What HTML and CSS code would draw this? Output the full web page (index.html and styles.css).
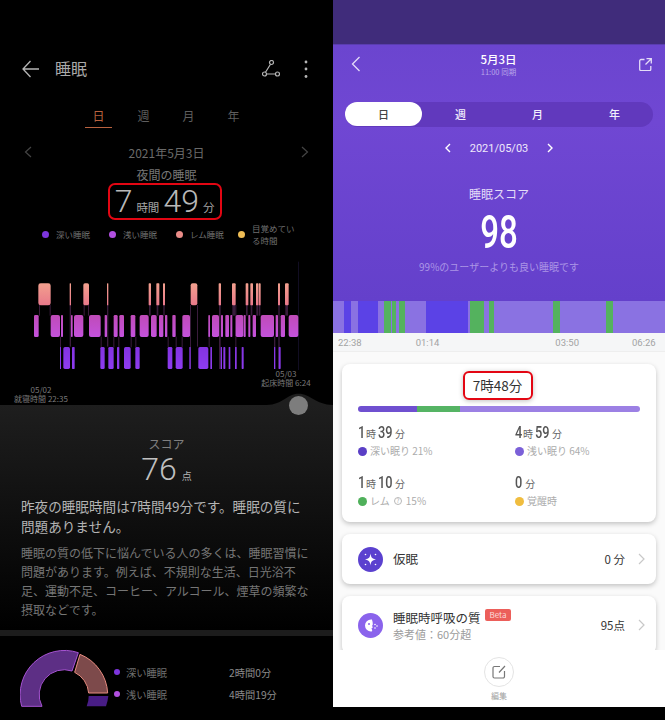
FILE: index.html
```html
<!DOCTYPE html>
<html lang="ja">
<head>
    <meta charset="UTF-8">
    <title>睡眠</title>
    <link rel="stylesheet" href="styles.css">
</head>
<body>
<div class="screens">

    <!-- dark app -->
    <section class="dark">
        <header class="d-head">
            <svg class="d-back" width="18" height="18" viewBox="0 0 18 18"><path d="M17 9H1M8.500 1 1 9l7.500 8" fill="none" stroke="#b5b5b5" stroke-width="1.300"/></svg>
            <h1 class="d-title">睡眠</h1>
            <svg class="d-link" width="18" height="18" viewBox="0 0 18 18"><g fill="none" stroke="#b5b5b5" stroke-width="1.200"><circle cx="9.500" cy="2.500" r="2"/><circle cx="2.500" cy="14" r="2"/><circle cx="15.500" cy="14" r="2"/><path d="M8.500 4.300 3.500 12.300M4.500 14h9"/></g></svg>
            <svg class="d-more" width="4" height="18" viewBox="0 0 4 18"><g fill="#b5b5b5"><circle cx="2" cy="2" r="1.400"/><circle cx="2" cy="9" r="1.400"/><circle cx="2" cy="16.500" r="1.400"/></g></svg>
        </header>

        <nav class="d-tabs">
            <span class="d-tab on">日</span>
            <span class="d-tab">週</span>
            <span class="d-tab">月</span>
            <span class="d-tab">年</span>
        </nav>

        <div class="d-date">
            <svg width="8" height="12" viewBox="0 0 8 12"><path d="M7 1 1.500 6 7 11" fill="none" stroke="#444" stroke-width="1.200"/></svg>
            <span>2021年5月3日</span>
            <svg width="8" height="12" viewBox="0 0 8 12"><path d="M1 1l5.500 5L1 11" fill="none" stroke="#444" stroke-width="1.200"/></svg>
        </div>

        <div class="d-night">夜間の睡眠</div>
        <div class="d-total-wrap">
            <div class="d-total"><b>7</b><i>時間</i><b>49</b><i>分</i></div>
        </div>

        <div class="d-legend">
            <span class="d-leg"><em class="dot c-deep"></em>深い睡眠</span>
            <span class="d-leg"><em class="dot c-light"></em>浅い睡眠</span>
            <span class="d-leg third"><em class="dot c-rem"></em>レム睡眠</span>
            <span class="d-leg last"><em class="dot c-wake"></em>目覚めている時間</span>
        </div>

        <div class="d-chart">
            <svg width="333" height="150" viewBox="0 0 999 450">
                <defs>
                    <linearGradient id="gr" x1="0" y1="0" x2="0" y2="1"><stop offset="0" stop-color="#f2a08e"/><stop offset="1" stop-color="#e9798a"/></linearGradient>
                    <linearGradient id="gl" x1="0" y1="0" x2="0" y2="1"><stop offset="0" stop-color="#bf4bb8"/><stop offset="1" stop-color="#c452dc"/></linearGradient>
                    <linearGradient id="gd" x1="0" y1="0" x2="0" y2="1"><stop offset="0" stop-color="#8333e0"/><stop offset="1" stop-color="#8e3cf0"/></linearGradient>
                </defs>
                <rect x="894" y="20" width="2" height="325" fill="#1a1433"/>
                <g class="bars">
                    <g fill="#3a1c3c">
                        <rect x="117" y="150" width="3" height="32"/><rect x="149" y="150" width="3" height="32"/><rect x="209" y="150" width="4" height="125"/><rect x="180" y="245" width="3" height="32"/><rect x="251" y="150" width="3" height="32"/><rect x="264" y="150" width="3" height="32"/><rect x="321" y="150" width="4" height="125"/><rect x="302" y="245" width="3" height="32"/><rect x="340" y="245" width="3" height="32"/><rect x="355" y="245" width="3" height="32"/><rect x="392" y="245" width="3" height="32"/><rect x="406" y="245" width="3" height="32"/><rect x="447" y="150" width="5" height="32"/><rect x="470" y="150" width="5" height="32"/><rect x="490" y="150" width="4" height="32"/><rect x="503" y="245" width="3" height="32"/><rect x="527" y="245" width="3" height="32"/><rect x="545" y="245" width="3" height="32"/><rect x="570" y="150" width="3" height="192"/><rect x="591" y="150" width="3" height="125"/><rect x="626" y="185" width="3" height="92"/><rect x="657" y="150" width="5" height="192"/><rect x="697" y="150" width="9" height="32"/><rect x="706" y="150" width="3" height="192"/><rect x="738" y="150" width="5" height="32"/><rect x="752" y="150" width="5" height="32"/><rect x="769" y="150" width="5" height="32"/><rect x="776" y="150" width="5" height="32"/><rect x="835" y="150" width="4" height="192"/><rect x="856" y="150" width="8" height="32"/><rect x="822" y="245" width="4" height="32"/>
                    </g>
                    <g fill="url(#gr)">
                        <rect x="115" y="85" width="37" height="66" rx="7"/><rect x="209" y="85" width="4" height="66" rx="1"/><rect x="250" y="85" width="17" height="66" rx="5"/><rect x="321" y="85" width="4" height="66" rx="1"/><rect x="446" y="85" width="7" height="66" rx="2"/><rect x="469" y="85" width="9" height="66" rx="2"/><rect x="489" y="85" width="6" height="66" rx="2"/><rect x="572" y="85" width="20" height="66" rx="6"/><rect x="656" y="85" width="7" height="66" rx="2"/><rect x="696" y="85" width="11" height="66" rx="3"/><rect x="737" y="85" width="8" height="66" rx="2"/><rect x="751" y="85" width="8" height="66" rx="2"/><rect x="768" y="85" width="7" height="66" rx="2"/><rect x="776" y="85" width="6" height="66" rx="2"/><rect x="834" y="85" width="6" height="66" rx="2"/><rect x="855" y="85" width="11" height="66" rx="3"/>
                    </g>
                    <g fill="url(#gl)">
                        <rect x="102" y="180" width="14" height="66" rx="4"/><rect x="152" y="180" width="28" height="66" rx="6"/><rect x="183" y="180" width="6" height="66" rx="2"/><rect x="213" y="180" width="5" height="66" rx="2"/><rect x="222" y="180" width="28" height="66" rx="6"/><rect x="267" y="180" width="35" height="66" rx="6"/><rect x="314" y="180" width="7" height="66" rx="2"/><rect x="341" y="180" width="12" height="66" rx="4"/><rect x="358" y="180" width="14" height="66" rx="4"/><rect x="392" y="180" width="14" height="66" rx="4"/><rect x="419" y="180" width="27" height="66" rx="6"/><rect x="453" y="180" width="17" height="66" rx="5"/><rect x="477" y="180" width="13" height="66" rx="4"/><rect x="495" y="180" width="7" height="66" rx="2"/><rect x="517" y="180" width="10" height="66" rx="3"/><rect x="547" y="180" width="23" height="66" rx="5"/><rect x="625" y="180" width="5" height="66" rx="2"/><rect x="636" y="180" width="21" height="66" rx="5"/><rect x="663" y="180" width="6" height="66" rx="2"/><rect x="676" y="180" width="11" height="66" rx="3"/><rect x="691" y="180" width="6" height="66" rx="2"/><rect x="707" y="180" width="23" height="66" rx="5"/><rect x="731" y="180" width="6" height="66" rx="2"/><rect x="745" y="180" width="6" height="66" rx="2"/><rect x="758" y="180" width="10" height="66" rx="3"/><rect x="782" y="180" width="40" height="66" rx="6"/><rect x="827" y="180" width="7" height="66" rx="2"/><rect x="842" y="180" width="13" height="66" rx="4"/><rect x="866" y="180" width="29" height="66" rx="6"/>
                    </g>
                    <g fill="url(#gd)">
                        <rect x="180" y="276" width="3" height="66" rx="1"/><rect x="190" y="276" width="20" height="66" rx="5"/><rect x="216" y="276" width="8" height="66" rx="2"/><rect x="301" y="276" width="13" height="66" rx="4"/><rect x="325" y="276" width="16" height="66" rx="4"/><rect x="351" y="276" width="7" height="66" rx="2"/><rect x="372" y="276" width="20" height="66" rx="5"/><rect x="406" y="276" width="13" height="66" rx="4"/><rect x="503" y="276" width="14" height="66" rx="4"/><rect x="527" y="276" width="21" height="66" rx="5"/><rect x="568" y="276" width="4" height="66" rx="1"/><rect x="595" y="276" width="30" height="66" rx="5"/><rect x="631" y="276" width="5" height="66" rx="1"/><rect x="662" y="276" width="4" height="66" rx="1"/><rect x="670" y="276" width="6" height="66" rx="2"/><rect x="686" y="276" width="5" height="66" rx="1"/><rect x="705" y="276" width="5" height="66" rx="1"/><rect x="725" y="276" width="6" height="66" rx="2"/><rect x="822" y="276" width="4" height="66" rx="1"/><rect x="836" y="276" width="6" height="66" rx="2"/>
                    </g>
                </g>
                <path d="M800 450C850 448 860 416 896 416C932 416 945 448 999 450Z" fill="#1e1e1e"/>
            </svg>
            <div class="d-bed">05/02<br>就寝時間 22:35</div>
            <div class="d-wake">05/03<br>起床時間 6:24</div>
            <span class="d-knob"></span>
        </div>

        <div class="d-panel">
            <div class="d-score-t">スコア</div>
            <div class="d-score"><b>76</b><i>点</i></div>
            <p class="d-msg">昨夜の睡眠時間は7時間49分です。睡眠の質に問題ありません。</p>
            <p class="d-note">睡眠の質の低下に悩んでいる人の多くは、睡眠習慣に問題があります。例えば、不規則な生活、日光浴不足、運動不足、コーヒー、アルコール、煙草の頻繁な摂取などです。</p>
        </div>

        <div class="d-bottom">
            <svg class="d-donut" width="90" height="60" viewBox="0 0 270 180">
                <path d="M5 178A133 133 0 0 1 175 17L156 72A75 75 0 0 0 66 178Z" fill="#5d2f85" stroke="#a653d2" stroke-width="3"/>
                <path d="M180 22A133 133 0 0 1 263 138H206A75 75 0 0 0 164 76Z" fill="#7d4a4b" stroke="#e88c80" stroke-width="3"/>
                <path d="M265 147A133 133 0 0 1 258 178H200A75 75 0 0 0 206 147Z" fill="#481d85"/>
            </svg>
            <div class="d-rows">
                <div class="d-row"><em class="dot c-deep"></em><span>深い睡眠</span><span class="d-val">2時間0分</span></div>
                <div class="d-row"><em class="dot c-light"></em><span>浅い睡眠</span><span class="d-val">4時間19分</span></div>
            </div>
        </div>
    </section>

    <!-- purple app -->
    <section class="light">
        <div class="l-status"></div>
        <div class="l-top">
            <header class="l-head">
                <svg width="10" height="16" viewBox="0 0 10 16"><path d="M8.500 1 1.500 8l7 7" fill="none" stroke="#e4dcf8" stroke-width="1.300"/></svg>
                <div class="l-head-mid">
                    <div class="l-day">5月3日</div>
                    <div class="l-sync">11:00 同期</div>
                </div>
                <svg width="13" height="13" viewBox="0 0 13 13"><path d="M5.500 1.500H2A1.300 1.300 0 0 0 .700 2.800v8.500A1.300 1.300 0 0 0 2 12.600h8.500a1.300 1.300 0 0 0 1.300-1.300V8M7.500.700h4.800v4.800M12.300.700 6.500 6.500" fill="none" stroke="#e4dcf8" stroke-width="1.300"/></svg>
            </header>

            <nav class="l-tabs">
                <span class="l-tab on">日</span>
                <span class="l-tab">週</span>
                <span class="l-tab">月</span>
                <span class="l-tab">年</span>
            </nav>

            <div class="l-date">
                <svg width="6" height="10" viewBox="0 0 6 10"><path d="M5 1 1 5l4 4" fill="none" stroke="#fff" stroke-width="1.400"/></svg>
                <span>2021/05/03</span>
                <svg width="6" height="10" viewBox="0 0 6 10"><path d="M1 1l4 4-4 4" fill="none" stroke="#fff" stroke-width="1.400"/></svg>
            </div>

            <div class="l-score-t">睡眠スコア</div>
            <div class="l-score">98</div>
            <div class="l-rank">99%のユーザーよりも良い睡眠です</div>
        </div>

        <div class="l-strip">
            <span class="s-d" style="left:11px;width:7px"></span>
            <span class="s-d" style="left:25px;width:20px"></span>
            <span class="s-d" style="left:93px;width:42px"></span>
            <span class="s-g" style="left:51px;width:7px"></span>
            <span class="s-g" style="left:59px;width:4px"></span>
            <span class="s-g" style="left:66px;width:6px"></span>
            <span class="s-g" style="left:137px;width:14px"></span>
            <span class="s-g" style="left:156px;width:5px"></span>
            <span class="s-g" style="left:220px;width:7px"></span>
            <span class="s-g" style="left:273px;width:7px"></span>
        </div>
        <div class="l-times"><span>22:38</span><span class="t2">01:14</span><span class="t3">03:50</span><span class="t4">06:26</span></div>

        <div class="l-body">
            <div class="card sum">
                <div class="sum-total-wrap"><div class="sum-total">7時48分</div></div>
                <div class="sum-bar"><span class="b1"></span><span class="b2"></span><span class="b3"></span></div>
                <div class="sum-grid">
                    <div class="stat">
                        <div class="stat-v"><b>1</b>時<b class="n2">39</b>分</div>
                        <div class="stat-l"><em class="dot2 d1"></em>深い眠り 21%</div>
                    </div>
                    <div class="stat">
                        <div class="stat-v"><b>4</b>時<b class="n2">59</b>分</div>
                        <div class="stat-l"><em class="dot2 d2"></em>浅い眠り 64%</div>
                    </div>
                    <div class="stat">
                        <div class="stat-v"><b>1</b>時<b class="n2">10</b>分</div>
                        <div class="stat-l"><em class="dot2 d3"></em>レム <span class="q">?</span> 15%</div>
                    </div>
                    <div class="stat">
                        <div class="stat-v"><b>0</b> 分</div>
                        <div class="stat-l"><em class="dot2 d4"></em>覚醒時</div>
                    </div>
                </div>
            </div>

            <div class="card row">
                <svg class="ico" width="25" height="25" viewBox="0 0 25 25"><circle cx="12.500" cy="12.500" r="12.500" fill="#5b41cf"/><path d="M12.500 6.500c.6 4 1.500 5 5.500 6-4 .8-5 1.800-5.500 6-.6-4.200-1.500-5.200-5.500-6 4-1 5-2 5.500-6Z" fill="#fff"/><g fill="#fff"><circle cx="7.500" cy="7.500" r=".8"/><circle cx="17.500" cy="7.500" r=".8"/><circle cx="7.500" cy="17.500" r=".8"/><circle cx="17.500" cy="17.500" r=".8"/></g></svg>
                <div class="row-main"><div class="row-t">仮眠</div></div>
                <span class="row-v">0 分</span>
                <svg class="chev" width="7" height="12" viewBox="0 0 7 12"><path d="M1 1l5 5-5 5" fill="none" stroke="#c8c8c8" stroke-width="1.200"/></svg>
            </div>

            <div class="card row tall">
                <svg class="ico" width="25" height="25" viewBox="0 0 25 25"><circle cx="12.500" cy="12.500" r="12.500" fill="#8a63ec"/><path d="M13 6.500a6 6 0 1 0 0 12c1 0 1.500-.8 1-1.800l-.5-1.500 1.500-1-1-1.200.8-1.500c0-3-.5-5-1.800-5.500Z" fill="#fff"/><circle cx="11" cy="11" r="1" fill="#8a63ec"/><g fill="#fff"><circle cx="17" cy="11.500" r=".8"/><circle cx="19" cy="13" r=".8"/><circle cx="17" cy="15" r=".8"/></g></svg>
                <div class="row-main">
                    <div class="row-t">睡眠時呼吸の質<span class="beta">Beta</span></div>
                    <div class="row-s">参考値：60分超</div>
                </div>
                <span class="row-v">95点</span>
                <svg class="chev" width="7" height="12" viewBox="0 0 7 12"><path d="M1 1l5 5-5 5" fill="none" stroke="#c8c8c8" stroke-width="1.200"/></svg>
            </div>
        </div>

        <footer class="l-foot">
            <span class="edit-btn">
                <svg width="14" height="14" viewBox="0 0 14 14"><path d="M8 1.500H2.500a1.500 1.500 0 0 0-1.500 1.500v8.500A1.500 1.500 0 0 0 2.500 13H11a1.500 1.500 0 0 0 1.500-1.500V6M13 1 7 7.500" fill="none" stroke="#777" stroke-width="1.200"/></svg>
            </span>
            <span class="edit-l">編集</span>
        </footer>
        <div class="l-nav"></div>
    </section>
</div>
</body>
</html>
```

FILE: styles.css
```css
* {
    box-sizing: border-box;
}

html, body {
    margin: 0;
    height: 720px;
    overflow: hidden;
    background: #000;
}

body {
    font-family: "Noto Sans CJK JP", "Noto Sans", sans-serif;
}

p, h1 {
    margin: 0;
    font-weight: normal;
}

i, em {
    font-style: normal;
}

.screens {
    display: flex;
    width: 665px;
    height: 720px;
}

.dot {
    flex: none;
    display: inline-block;
    width: 6px;
    height: 6px;
    border-radius: 50%;
}

.c-deep { background: #7d35dd; }
.c-light { background: #b14fe0; }
.c-rem { background: #ea8c88; }
.c-wake { background: #efbd55; }

/* dark app */
.dark {
    width: 333px;
    height: 720px;
    overflow: hidden;
    background: #000;
    color: #888;
}

.d-head {
    display: flex;
    align-items: center;
    height: 38px;
    margin-top: 50px;
    padding: 0 25px 0 22px;
}

.d-title {
    flex: 1;
    margin: -2px 0 0 15px;
    font-size: 16px;
    color: #aaa;
}

.d-more {
    margin-left: 24px;
}

.d-tabs {
    display: flex;
    margin: 16px 0 0 76px;
}

.d-tab {
    width: 45px;
    height: 24px;
    text-align: center;
    font-size: 12px;
    line-height: 24px;
    color: #5e5e5e;
}

.d-tab.on {
    color: #b9623f;
    box-shadow: inset 0 -1px 0 #b9623f;
    margin: 0 9px;
    width: 27px;
}

.d-date {
    display: flex;
    justify-content: space-between;
    align-items: center;
    height: 18px;
    margin-top: 15px;
    padding: 0 24px;
    font-size: 12px;
    color: #6a6a6a;
}

.d-night {
    margin-top: 5px;
    text-align: center;
    font-size: 12px;
    line-height: 18px;
    color: #777;
}

.d-total-wrap {
    display: flex;
    justify-content: center;
    margin: -1px 3px 0 0;
}

.d-total {
    display: flex;
    align-items: baseline;
    justify-content: center;
    width: 114px;
    height: 37px;
    padding-left: 3px;
    border: 2px solid #e30613;
    border-radius: 7px;
    font-family: Roboto, sans-serif;
    color: #b8b8b8;
    line-height: 32px;
}

.d-total b {
    font-size: 32px;
    font-weight: 300;
}

.d-total i {
    margin: 0 4px;
    font-family: "Noto Sans CJK JP", sans-serif;
    font-size: 11.500px;
    color: #a6a6a6;
}

.d-legend {
    display: flex;
    align-items: center;
    height: 30px;
    margin: -1px 0 6px;
    padding-left: 42px;
    font-size: 8.500px;
    color: #6f6f6f;
}

.d-legend .dot {
    width: 7px;
    height: 7px;
}

.d-leg {
    display: flex;
    align-items: center;
    gap: 7px;
    margin-right: 19px;
    white-space: nowrap;
}

.d-leg.third {
    margin-right: 14px;
}

.d-leg.last {
    width: 62px;
    margin: 0;
    white-space: normal;
    line-height: 12px;
}

.d-chart {
    position: relative;
    height: 150px;
}

.d-chart svg {
    display: block;
}

.bars {
    filter: blur(1.2px);
}

.d-bed, .d-wake {
    position: absolute;
    text-align: center;
    font-size: 8px;
    line-height: 9px;
    color: #7a7a7a;
}

.d-bed {
    left: 12px;
    top: 130px;
    width: 58px;
}

.d-wake {
    left: 260px;
    top: 114px;
    width: 52px;
}

.d-knob {
    position: absolute;
    left: 289px;
    top: 141px;
    width: 19px;
    height: 19px;
    border-radius: 50%;
    background: #7d7d7d;
}

.d-panel {
    height: 225px;
    padding: 31px 21px 0;
    background: linear-gradient(#1e1e1e, #000);
}

.d-score-t {
    text-align: center;
    font-size: 12px;
    line-height: 16px;
    color: #7f7f7f;
}

.d-score {
    display: flex;
    justify-content: center;
    align-items: baseline;
    height: 34px;
    color: #b2b2b2;
    line-height: 34px;
}

.d-score b {
    font-family: Roboto, sans-serif;
    font-size: 32px;
    font-weight: 300;
    color: #c0c0c0;
}

.d-score i {
    margin-left: 5px;
    font-size: 10px;
}

.d-msg {
    margin-top: 10px;
    font-size: 13.600px;
    line-height: 20px;
    color: #b4b4b4;
}

.d-note {
    margin-top: 7px;
    font-size: 12px;
    line-height: 19px;
    color: #767676;
}

.d-bottom {
    display: flex;
    height: 84px;
    padding: 11px 0 0 20px;
    border-top: 6px solid #1c1c1c;
}

.d-donut {
    flex: none;
    display: block;
}

.d-rows {
    margin: 14px 0 0 4px;
}

.d-row {
    display: flex;
    align-items: center;
    height: 22px;
    font-size: 10.250px;
    color: #6f6f6f;
}

.d-row .dot {
    margin-right: 6px;
}

.d-row span {
    width: 103px;
}

.d-val {
    color: #8b8b8b;
}

/* purple app */
.light {
    display: flex;
    flex-direction: column;
    width: 332px;
    height: 720px;
    overflow: hidden;
    background: #fafafa;
}

.l-status {
    flex: none;
    height: 45px;
    background: #402c7b;
    border-bottom: 1px solid #5a3db0;
}

.l-top {
    flex: none;
    height: 256px;
    padding: 0 12px;
    background: linear-gradient(#6b45cf, #7047d3 30%, #6440cb);
    color: #fff;
}

.l-head {
    display: flex;
    justify-content: space-between;
    align-items: center;
    height: 38px;
    padding: 0 1px 0 6px;
}

.l-head-mid {
    margin: -1px 3px 0 0;
    text-align: center;
}

.l-day {
    font-size: 11.500px;
    font-weight: 500;
    line-height: 16px;
}

.l-sync {
    font-size: 7.500px;
    line-height: 10px;
    color: #b9a6ea;
}

.l-tabs {
    display: grid;
    grid-template-columns: repeat(4, 1fr);
    height: 25px;
    margin-top: 19px;
    border-radius: 13px;
    background: #6139bd;
}

.l-tab {
    text-align: center;
    font-size: 11px;
    font-weight: 500;
    line-height: 25px;
    color: #f2eefc;
}

.l-tab.on {
    height: 24px;
    border-radius: 12px;
    background: #fff;
    color: #444;
}

.l-date {
    display: flex;
    justify-content: center;
    align-items: center;
    gap: 19px;
    height: 18px;
    margin-top: 12px;
    font-family: Roboto, sans-serif;
    font-size: 11px;
    color: #efe9fb;
}

.l-score-t {
    margin-top: 28px;
    text-align: center;
    font-size: 12px;
    line-height: 18px;
    color: #e4dcf8;
}

.l-score {
    height: 44px;
    margin-top: 7px;
    text-align: center;
    font-family: Roboto, sans-serif;
    font-size: 46px;
    font-weight: 500;
    line-height: 44px;
    transform: scaleX(.72);
}

.l-rank {
    margin-top: 6px;
    text-align: center;
    font-size: 10px;
    line-height: 14px;
    color: #ab95e6;
}

.l-strip {
    flex: none;
    position: relative;
    height: 32px;
    background: #8a72e2;
}

.s-d, .s-g {
    position: absolute;
    top: 0;
    height: 100%;
}

.s-d { background: #5b42e6; }
.s-g { background: #54b25e; }

.l-times {
    flex: none;
    display: flex;
    height: 19px;
    padding: 0 5px;
    background: #f5f6f7;
    border-bottom: 1px solid #eee;
    font-family: Roboto, sans-serif;
    font-size: 9.500px;
    line-height: 19px;
    color: #a3a3a3;
}

.l-times .t2 {
    margin-left: 54px;
}

.l-times .t3 {
    margin-left: 116px;
}

.l-times .t4 {
    margin-left: 53px;
}

.l-body {
    flex: 1;
    min-height: 0;
    overflow: hidden;
    padding: 12px 9px 0;
}

.card {
    border-radius: 8px;
    background: #fff;
    box-shadow: 0 2px 5px rgba(0,0,0,0.22);
}

.sum {
    height: 158px;
    padding: 7px 16px 0;
}

.sum-total-wrap {
    display: flex;
    justify-content: center;
    padding-right: 3px;
}

.sum-total {
    width: 70px;
    height: 29px;
    border: 2px solid #e30613;
    border-radius: 6px;
    box-shadow: 0 1px 5px rgba(0,0,0,0.25);
    text-align: center;
    font-size: 13.500px;
    line-height: 25px;
    color: #333;
}

.sum-bar {
    display: flex;
    height: 6px;
    margin-top: 6px;
    border-radius: 3px;
    overflow: hidden;
}

.b1 { width: 21%; background: #6f50d0; }
.b2 { width: 15%; background: #55b464; }
.b3 { flex: 1; background: #9c80e4; }

.sum-grid {
    display: grid;
    grid-template-columns: 157px 1fr;
    grid-auto-rows: 50px;
    margin-top: 9px;
}

.stat-v {
    font-size: 10px;
    line-height: 22px;
    color: #666;
}

.stat-v b {
    display: inline-block;
    width: 8px;
    font-family: Roboto, sans-serif;
    font-size: 17px;
    font-weight: 500;
    color: #555;
    transform: scaleX(.75);
    transform-origin: left;
}

.stat-v b.n2 {
    width: 15px;
    margin: 0 2px;
}

.stat-l {
    display: flex;
    align-items: center;
    gap: 3px;
    font-size: 10px;
    line-height: 12px;
    color: #acacac;
}

.dot2 {
    width: 9px;
    height: 9px;
    border-radius: 50%;
}

.d1 { background: #5a3fc6; }
.d2 { background: #7b60d8; }
.d3 { background: #4fb05a; }
.d4 { background: #f0bd3f; }

.q {
    display: inline-block;
    width: 8px;
    height: 8px;
    margin: 0 1px;
    border: 1px solid #b8b8b8;
    border-radius: 50%;
    text-align: center;
    font-size: 6px;
    line-height: 6px;
}

.row {
    display: flex;
    align-items: center;
    height: 50px;
    margin-top: 12px;
    padding: 0 11px 0 16px;
}

.row.tall {
    height: 58px;
}

.ico {
    flex: none;
}

.row-main {
    flex: 1;
    margin-left: 10px;
}

.row-t {
    font-size: 12.500px;
    line-height: 18px;
    color: #333;
}

.row-s {
    font-size: 11px;
    line-height: 15px;
    color: #9c9c9c;
}

.beta {
    display: inline-block;
    vertical-align: 5px;
    margin-left: 4px;
    padding: 0 5px;
    border-radius: 2px;
    background: #ec5f5a;
    font-size: 8px;
    line-height: 12px;
    color: #fbdcdb;
}

.row-v {
    font-size: 11.500px;
    color: #333;
}

.chev {
    margin-left: 13px;
}

.l-foot {
    flex: none;
    display: flex;
    flex-direction: column;
    align-items: center;
    height: 57px;
    padding-top: 7px;
    background: #fff;
}

.edit-btn {
    display: flex;
    align-items: center;
    justify-content: center;
    width: 30px;
    height: 30px;
    border: 1px solid #e4e4e4;
    border-radius: 50%;
}

.edit-l {
    margin-top: 3px;
    font-size: 8px;
    line-height: 11px;
    color: #a0a0a0;
}

.l-nav {
    flex: none;
    height: 13px;
    background: #000;
}
```
